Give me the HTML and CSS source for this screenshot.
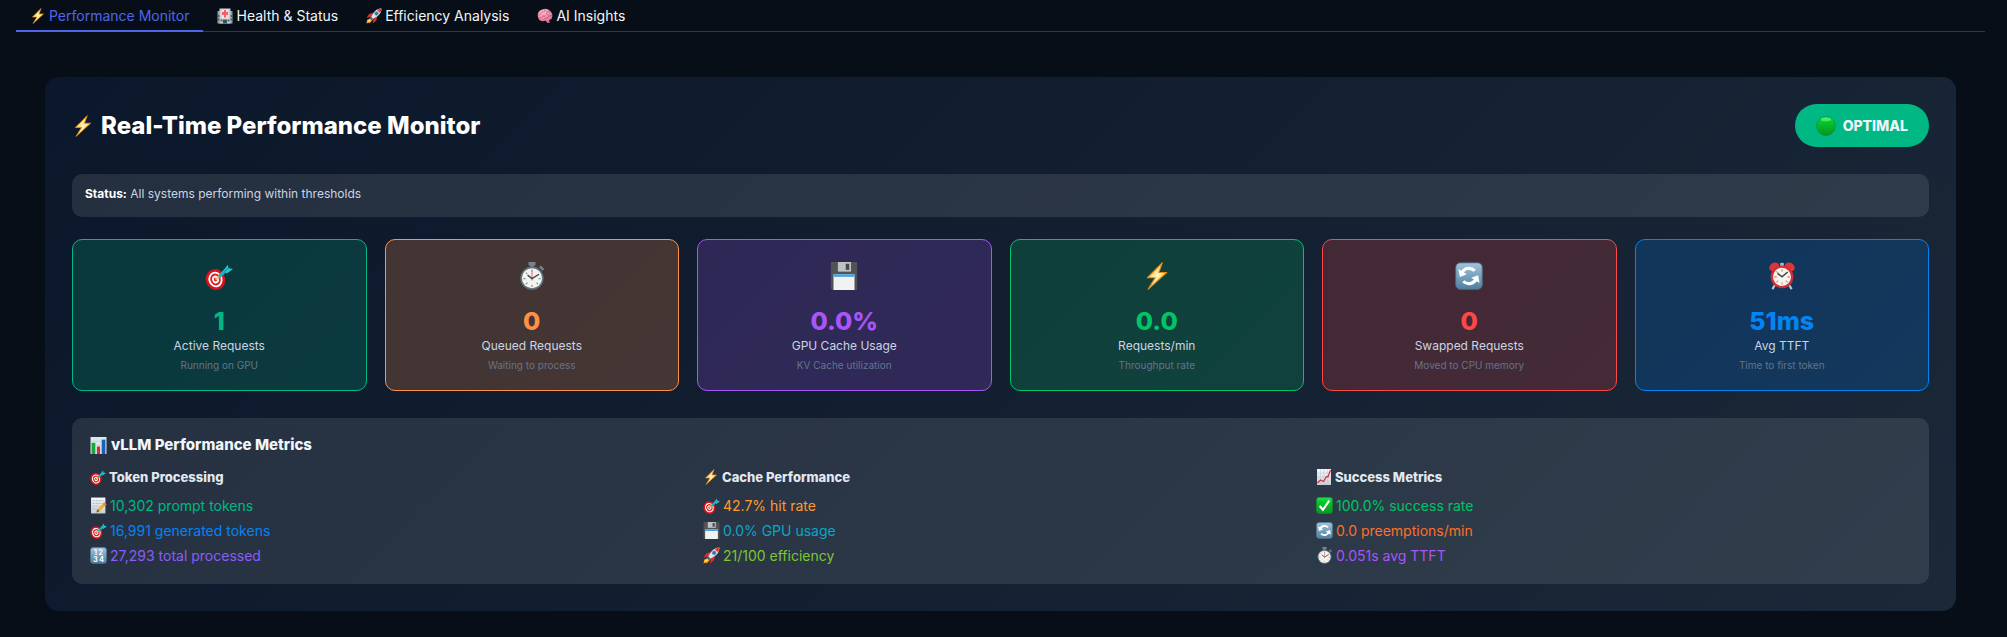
FILE: index.html
```html
<!DOCTYPE html>
<html lang="en">
<head>
<meta charset="utf-8">
<title>Performance Monitor</title>
<link rel="stylesheet" href="styles.css">
</head>
<body>
<svg class="sprite" aria-hidden="true">
  <defs>
    <linearGradient id="g-bolt" x1="0" y1="0" x2="1" y2="1"><stop offset="0" stop-color="#ff9d1c"/><stop offset=".5" stop-color="#fff6b8"/><stop offset="1" stop-color="#f59a1b"/></linearGradient>
    <linearGradient id="g-blue" x1="0" y1="0" x2="0" y2="1"><stop offset="0" stop-color="#a3c4dc"/><stop offset="1" stop-color="#4f7f9f"/></linearGradient>
    <linearGradient id="g-green" x1="0" y1="0" x2="0" y2="1"><stop offset="0" stop-color="#22ee4c"/><stop offset=".25" stop-color="#06c72b"/><stop offset="1" stop-color="#079422"/></linearGradient>
    <linearGradient id="g-paper" x1="0" y1="0" x2="0" y2="1"><stop offset="0" stop-color="#f5f7f9"/><stop offset="1" stop-color="#c6d0d8"/></linearGradient>
    <radialGradient id="g-brain" cx=".4" cy=".3" r=".7"><stop offset="0" stop-color="#ffc4d3"/><stop offset="1" stop-color="#dd6c8f"/></radialGradient>
  </defs>
  <symbol id="bolt" viewBox="0 0 32 32"><path d="M22 1 5 18h9L6 31 27 12h-9z" fill="url(#g-bolt)" stroke="#e58a17" stroke-width="1.4" stroke-linejoin="round"/></symbol>
  <symbol id="hospital" viewBox="0 0 32 32"><path d="M1 6h30v25H1z" fill="#8ba0a5"/><path d="M5 1h22v30H5z" fill="#c9d1cf"/><path d="M9 3h14v18H9z" fill="#f5dfe0"/><path d="M14 4h4v4h4v6h-4v5h-4v-5h-4V8h4z" fill="#f0606a"/><path d="M2 14h3v4H2zM27 14h3v4h-3zM2 21h3v4H2zM27 21h3v4h-3zM7 23h4v4H7zM21 23h4v4h-4z" fill="#49616c"/><path d="M12 23h8v8h-8z" fill="#375463"/></symbol>
  <symbol id="rocket" viewBox="0 0 32 32"><path d="M10 20 2 24l-1 7 5-2 1 2 7-8z" fill="#ff9e1b"/><path d="m9 22-5 3-1 4 7-4z" fill="#ffe45c"/><path d="m15 9-9 3-5 8 10-3zM23 17l-3 9-7 5 2-9z" fill="#dd2d2d"/><path d="M31 1c-9 0-15 5-21 17l4 4C26 16 31 10 31 1z" fill="#d9e4eb"/><path d="M31 1c-3 0-6 1-9 3l6 6c2-3 3-6 3-9z" fill="#e13a35"/><circle cx="21" cy="11" r="3.4" fill="#2878b5" stroke="#667f91" stroke-width="1.4"/><path d="m9 18 5 5-3 2-4-4z" fill="#596d7b"/></symbol>
  <symbol id="brain" viewBox="0 0 32 32"><path d="M3 21C-1 13 3 4 11 3c5-3 11-1 14 2 5 3 7 9 5 14 0 3-3 5-6 5l2 5-5 1-4-5c-5 3-12 1-14-4z" fill="url(#g-brain)"/><path d="M4 14c5-1 3-6 8-6s4-3 3-5M11 14c4 3 8-1 8-4s5-4 7-1M5 20c5 1 5-4 9-3s5 4 9 1 5-4 7-2M12 24c1-4 6-1 8-3M22 12c-2 2 0 5 3 4" fill="none" stroke="#b94771" stroke-width="1.2" stroke-linecap="round"/></symbol>
  <symbol id="dot" viewBox="0 0 32 32"><circle cx="16" cy="16" r="15" fill="url(#g-green)" stroke="#078d25"/><ellipse cx="16" cy="5.500" rx="8" ry="3" fill="#7cff8f" opacity=".5"/></symbol>
  <symbol id="target" viewBox="0 0 32 32"><g transform="rotate(-18 12 20)"><ellipse cx="12" cy="20" rx="11" ry="12" fill="#d9151b"/><ellipse cx="12" cy="20" rx="8" ry="9" fill="#fff"/><ellipse cx="12" cy="20" rx="6" ry="6.8" fill="#dc2026"/><ellipse cx="12" cy="20" rx="3.8" ry="4.4" fill="#fff"/><ellipse cx="12" cy="20" rx="1.9" ry="2.2" fill="#dc2026"/></g><path d="m12 20 6-5" stroke="#f5c747" stroke-width="2"/><path d="m16 17 8-8" stroke="#18b4c2" stroke-width="4"/><path d="m21 10 5-7 1 4 5 1-7 5z" fill="#22c8d2"/><path d="m22 11 6-5" stroke="#087b90"/></symbol>
  <symbol id="stopwatch" viewBox="0 0 32 32"><path d="M12 0h8v4h-8zM14 3h4v4h-4z" fill="#75838b"/><path d="m26 4 4 4-2 2-4-4z" fill="#75838b"/><circle cx="16" cy="18.500" r="13.300" fill="#5e707b"/><circle cx="16" cy="18.500" r="11.500" fill="#f3f4f2"/><path d="M16 8.500v3M16 26v2.500M6 19h2.500M23.500 19H26M9 12l1.800 1.800M23 25.500l-1.800-1.800M9 25.500l1.800-1.800" stroke="#84908f" stroke-width="1.2"/><path d="M16 21V10" stroke="#ee756c" stroke-width="1.3"/><path d="m11 15 5 4 8-5" fill="none" stroke="#3c464b" stroke-width="1.5"/></symbol>
  <symbol id="floppy" viewBox="0 0 32 32"><path d="M1 0h30v32H3l-2-2z" fill="#505357"/><path d="M9 0h15v11H9z" fill="#bfc2c3"/><path d="M18 2h4v7h-4z" fill="#45494c"/><path d="M4 14h24v18H4z" fill="#f0f2f3"/><path d="M4 14h24v3H4z" fill="#4aa2df"/></symbol>
  <symbol id="refresh" viewBox="0 0 32 32"><rect x="1" y="1" width="30" height="30" rx="5" fill="url(#g-blue)" stroke="#527f9a"/><path d="M7.500 13.500A9 9 0 0 1 22.500 10M24.500 18.500A9 9 0 0 1 9.500 22" fill="none" stroke="#fff" stroke-width="3.600"/><path d="m4 8 1.500 9 8-3zM28 24l-1.500-9-8 3z" fill="#fff"/></symbol>
  <symbol id="alarm" viewBox="0 0 32 32"><path d="m8 26-3 5M24 26l3 5" stroke="#bfc7ca" stroke-width="2.500"/><ellipse cx="7" cy="5.500" rx="6" ry="4.500" transform="rotate(-35 7 5.500)" fill="#df3538"/><ellipse cx="25" cy="5.500" rx="6" ry="4.500" transform="rotate(35 25 5.500)" fill="#df3538"/><path d="M14 1h4v5h-4z" fill="#b4bcc0"/><circle cx="16" cy="17" r="13" fill="#cf3035"/><circle cx="16" cy="17" r="10.300" fill="#f7f5ee"/><path d="M16 8v3M16 23v3M7 17h3M22 17h3M9.600 10.600l2 2M22.400 23.400l-2-2M9.600 23.400l2-2" stroke="#e77b78" stroke-width="1.2"/><path d="m11 13 5 4 6.500-5.500" fill="none" stroke="#34444a" stroke-width="1.600"/></symbol>
  <symbol id="bars" viewBox="0 0 32 32"><path d="M1 0h30v32H1z" fill="#dbe7ec"/><path d="M1 8h30M1 16h30M1 24h30" stroke="#b5c8d3"/><path d="M3 11h7v21H3z" fill="#14aa39"/><path d="M13 18h6v14h-6z" fill="#d62b3b"/><path d="M22 5h7v27h-7z" fill="#1763b7"/></symbol>
  <symbol id="memo" viewBox="0 0 32 32"><path d="M2 1h27v30H2z" fill="url(#g-paper)"/><path d="M5 7h21M5 12h19M5 17h13M5 22h8" stroke="#a5adb2" stroke-width="1.5" stroke-dasharray="4 1.500"/><path d="m27 10 4 4-13 13-6 2 2-6z" fill="#f2af26"/><path d="m27 10 4 4-3 3-4-4z" fill="#e27a76"/><path d="m14 23 4 4-6 2z" fill="#765331"/></symbol>
  <symbol id="trend" viewBox="0 0 32 32"><path d="M2 0h28v32H2z" fill="url(#g-paper)"/><path d="M2 8h28M2 16h28M2 24h28M9 0v32M16 0v32M23 0v32" stroke="#bdcbd4"/><path d="m3 28 6-6 6 3 6-10 3 1 5-14" fill="none" stroke="#d92f39" stroke-width="2.500"/></symbol>
  <symbol id="check" viewBox="0 0 32 32"><rect x="1" y="1" width="30" height="30" rx="5" fill="url(#g-green)" stroke="#0a9b2a"/><path d="m7 17 6 7L25 7" fill="none" stroke="#fff" stroke-width="4"/></symbol>
</svg>

<nav class="tabs" role="tablist" aria-label="Dashboard views">
  <button class="tab tab-active" role="tab" aria-selected="true"><svg class="icon"><use href="#bolt"/></svg>Performance Monitor</button>
  <button class="tab" role="tab" aria-selected="false"><svg class="icon"><use href="#hospital"/></svg>Health &amp; Status</button>
  <button class="tab" role="tab" aria-selected="false"><svg class="icon"><use href="#rocket"/></svg>Efficiency Analysis</button>
  <button class="tab" role="tab" aria-selected="false"><svg class="icon"><use href="#brain"/></svg>AI Insights</button>
</nav>

<main class="monitor">
  <header class="monitor-header">
    <h1 class="title"><svg class="icon icon-title"><use href="#bolt"/></svg>Real-Time Performance Monitor</h1>
    <div class="badge"><svg class="icon icon-badge"><use href="#dot"/></svg>OPTIMAL</div>
  </header>

  <p class="status"><strong class="status-label">Status:</strong> All systems performing within thresholds</p>

  <section class="cards" aria-label="Live metrics">
    <article class="card teal"><svg class="icon icon-card"><use href="#target"/></svg><div class="value">1</div><h2 class="label">Active Requests</h2><p class="note">Running on GPU</p></article>
    <article class="card orange"><svg class="icon icon-card"><use href="#stopwatch"/></svg><div class="value">0</div><h2 class="label">Queued Requests</h2><p class="note">Waiting to process</p></article>
    <article class="card purple"><svg class="icon icon-card"><use href="#floppy"/></svg><div class="value">0.0%</div><h2 class="label">GPU Cache Usage</h2><p class="note">KV Cache utilization</p></article>
    <article class="card green"><svg class="icon icon-card"><use href="#bolt"/></svg><div class="value">0.0</div><h2 class="label">Requests/min</h2><p class="note">Throughput rate</p></article>
    <article class="card red"><svg class="icon icon-card"><use href="#refresh"/></svg><div class="value">0</div><h2 class="label">Swapped Requests</h2><p class="note">Moved to CPU memory</p></article>
    <article class="card blue"><svg class="icon icon-card"><use href="#alarm"/></svg><div class="value">51ms</div><h2 class="label">Avg TTFT</h2><p class="note">Time to first token</p></article>
  </section>

  <section class="details">
    <h2 class="details-title"><svg class="icon icon-row"><use href="#bars"/></svg>vLLM Performance Metrics</h2>
    <div class="columns">
      <div>
        <h3 class="column-title"><svg class="icon"><use href="#target"/></svg>Token Processing</h3>
        <ul class="rows">
          <li class="row c-teal"><svg class="icon icon-row"><use href="#memo"/></svg>10,302 prompt tokens</li>
          <li class="row c-blue"><svg class="icon icon-row"><use href="#target"/></svg>16,991 generated tokens</li>
          <li class="row c-violet"><svg class="icon icon-row" viewBox="0 0 32 32" aria-hidden="true"><rect x="1" y="1" width="30" height="30" rx="5" fill="url(#g-blue)" stroke="#527f9a"/><text x="16" y="15" class="digit-text">1 2</text><text x="16" y="28" class="digit-text">3 4</text></svg>27,293 total processed</li>
        </ul>
      </div>
      <div>
        <h3 class="column-title"><svg class="icon"><use href="#bolt"/></svg>Cache Performance</h3>
        <ul class="rows">
          <li class="row c-amber"><svg class="icon icon-row"><use href="#target"/></svg>42.7% hit rate</li>
          <li class="row c-cyan"><svg class="icon icon-row"><use href="#floppy"/></svg>0.0% GPU usage</li>
          <li class="row c-lime"><svg class="icon icon-row"><use href="#rocket"/></svg>21/100 efficiency</li>
        </ul>
      </div>
      <div>
        <h3 class="column-title"><svg class="icon"><use href="#trend"/></svg>Success Metrics</h3>
        <ul class="rows">
          <li class="row c-green"><svg class="icon icon-row"><use href="#check"/></svg>100.0% success rate</li>
          <li class="row c-orange"><svg class="icon icon-row"><use href="#refresh"/></svg>0.0 preemptions/min</li>
          <li class="row c-purple"><svg class="icon icon-row"><use href="#stopwatch"/></svg>0.051s avg TTFT</li>
        </ul>
      </div>
    </div>
  </section>
</main>
</body>
</html>
```
FILE: styles.css
```css
* { box-sizing: border-box; }

body {
  margin: 0;
  padding: 0 22px 26px 16px;
  background: #070e17;
  color: #f1f5f9;
  font-family: Inter, "Open Sans", sans-serif;
}

h1, h2, h3, p, ul { margin: 0; padding: 0; }
ul { list-style: none; }

.sprite { position: absolute; width: 0; height: 0; }
.digit-text { font: 700 13px Inter, sans-serif; fill: #fff; text-anchor: middle; }

.icon { width: 16px; height: 16px; flex: none; }
.icon-row { width: 17px; height: 17px; }
.icon-title { width: 22px; height: 22px; }
.icon-badge { width: 20px; height: 20px; }
.icon-card { width: 28px; height: 28px; }

.tabs { display: flex; height: 32px; box-shadow: inset 0 -1px #2f3a48; }
.tab {
  display: flex;
  align-items: center;
  gap: 3px;
  padding: 2px 14px 0;
  border: 0;
  border-bottom: 2px solid transparent;
  background: none;
  color: #f1f5f9;
  font: 400 14px/18px Inter, "Open Sans", sans-serif;
}
.tab-active { border-bottom-color: #4f66e8; color: #4f66e8; }

.monitor {
  margin: 45px 29px 0;
  padding: 27px;
  border-radius: 14px;
  background: linear-gradient(135deg, #0b172a, #1a2838);
}
.monitor-header { display: flex; align-items: center; justify-content: space-between; height: 43px; }
.title { display: flex; align-items: center; gap: 7px; color: #fff; font-size: 24px; line-height: 32px; font-weight: 800; }
.badge {
  display: flex;
  align-items: center;
  gap: 7px;
  height: 43px;
  padding: 0 21px;
  border-radius: 22px;
  background: #00b884;
  color: #f1f5f9;
  font-size: 14px;
  font-weight: 800;
}

.status {
  margin-top: 27px;
  padding: 11px 13px 14px;
  border-radius: 10px;
  background: rgba(255, 255, 255, 0.1);
  color: #cbd5e1;
  font-size: 12px;
  line-height: 18px;
}
.status-label { color: #fff; font-weight: 700; }

.cards { display: grid; grid-template-columns: repeat(6, 1fr); gap: 18px; margin-top: 22px; }
.card {
  display: flex;
  flex-direction: column;
  align-items: center;
  padding: 22px 16px 17px;
  border: 1px solid;
  border-radius: 10px;
}
.value { margin-top: 15px; font-size: 25px; line-height: 32px; font-weight: 800; }
.label { color: #cbd5e1; font-size: 12px; line-height: 18px; font-weight: 400; }
.note { margin-top: 3px; color: #64748b; font-size: 10px; line-height: 15px; }

.teal { color: #00b884; background: rgba(0, 184, 132, 0.2); }
.orange { color: #ff9147; background: rgba(255, 145, 71, 0.22); }
.purple { color: #a855f7; background: rgba(168, 85, 247, 0.2); }
.green { color: #00c466; background: rgba(0, 196, 102, 0.2); }
.red { color: #ff4747; background: rgba(255, 71, 71, 0.2); }
.blue { color: #0284f5; background: rgba(2, 132, 245, 0.2); }

.details { margin-top: 27px; padding: 17px 18px 16px; border-radius: 10px; background: rgba(255, 255, 255, 0.1); }
.details-title { display: flex; align-items: center; gap: 4px; font-size: 15px; line-height: 20px; font-weight: 800; }
.columns { display: grid; grid-template-columns: repeat(3, 1fr); gap: 18px; margin-top: 12px; }
.column-title { display: flex; align-items: center; gap: 3px; color: #e2e8f0; font-size: 13px; line-height: 20px; font-weight: 800; }
.rows { margin-top: 6px; }
.row { display: flex; align-items: center; gap: 3px; font-size: 14px; line-height: 25px; }

.c-teal { color: #00b884; }
.c-blue { color: #0284f5; }
.c-violet { color: #8b5cf6; }
.c-amber { color: #ff9a2e; }
.c-cyan { color: #06a9c7; }
.c-lime { color: #7bc832; }
.c-green { color: #00c466; }
.c-orange { color: #ff6f26; }
.c-purple { color: #a855f7; }
```
